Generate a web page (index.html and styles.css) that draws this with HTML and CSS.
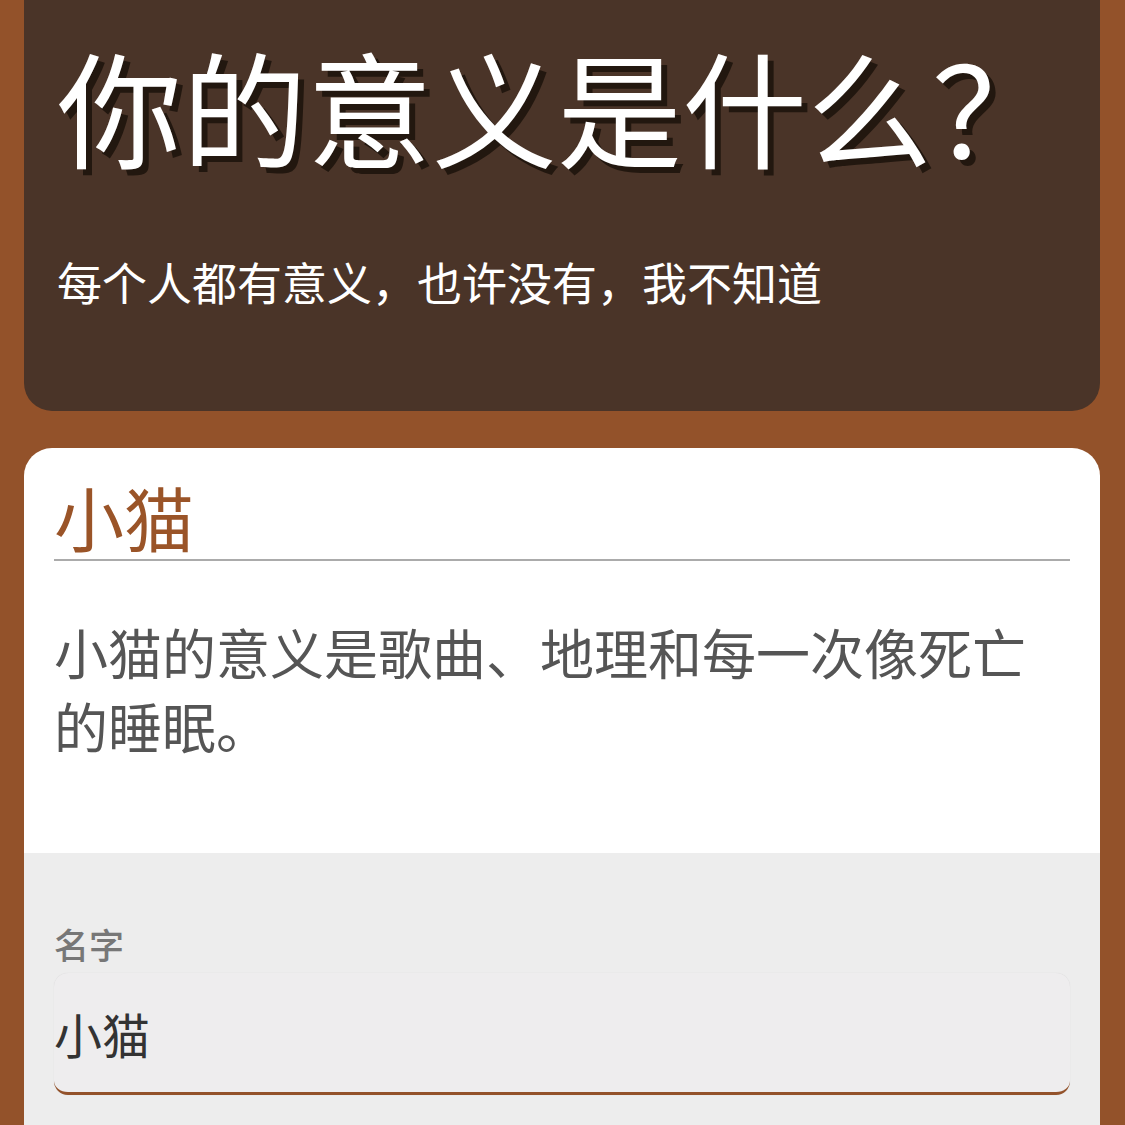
FILE: index.html
```html
<!DOCTYPE html>
<html lang="zh">
<head>
<meta charset="utf-8">
<title>你的意义是什么？</title>
<link rel="stylesheet" href="styles.css">
</head>
<body>
<div class="page">
  <header class="hero">
    <h1 class="hero-title">你的意义是什么？</h1>
    <p class="hero-sub">每个人都有意义，也许没有，我不知道</p>
  </header>
  <section class="card">
    <div class="card-body">
      <h2 class="card-title">小猫</h2>
      <p class="card-text">小猫的意义是歌曲、地理和每一次像死亡的睡眠。</p>
    </div>
    <div class="card-form">
      <label class="field-label" for="name">名字</label>
      <div class="field-input" id="name">小猫</div>
    </div>
  </section>
</div>
</body>
</html>
```

FILE: styles.css
```css
html, body {
  margin: 0;
  padding: 0;
  background: #93522a;
  font-family: "Noto Sans CJK SC", "Noto Sans", sans-serif;
}

.page {
  padding: 0 25px 0 24px;
  display: flex;
  flex-direction: column;
  gap: 37px;
}

.hero {
  background: #4a3428;
  border-radius: 0 0 28px 28px;
  padding: 31px 30px 98px 33px;
}

.hero-title {
  margin: 0;
  font-size: 125px;
  font-weight: 400;
  line-height: 148px;
  color: #ffffff;
  text-shadow: 6px 6px 0 #22170f;
  white-space: nowrap;
}

.hero-sub {
  margin: 71px 0 0 0;
  font-size: 45px;
  line-height: 63px;
  color: #ffffff;
  white-space: nowrap;
}

.card {
  background: #ffffff;
  border-radius: 28px 28px 0 0;
  overflow: hidden;
  height: 720px;
  display: flex;
  flex-direction: column;
}

.card-body {
  padding: 27px 30px 0 30px;
  height: 405px;
  box-sizing: border-box;
  flex: none;
}

.card-title {
  margin: 0;
  font-size: 70px;
  font-weight: 400;
  line-height: 84px;
  color: #9a5428;
  border-bottom: 2px solid #ababab;
}

.card-text {
  margin: 54px 0 0 0;
  font-size: 54px;
  line-height: 74px;
  color: #555555;
}

.card-form {
  flex: 1;
  background: #ededed;
  padding: 71px 30px 0 30px;
  display: flex;
  flex-direction: column;
}

.field-label {
  font-size: 35px;
  line-height: 40px;
  font-weight: 500;
  color: #777777;
  margin-bottom: 9px;
}

.field-input {
  height: 119px;
  flex: none;
  border-radius: 14px;
  border-bottom: 3px solid #93522a;
  background: #eeedee;
  font-size: 48px;
  color: #333333;
  display: flex;
  align-items: center;
  box-shadow: 0 0 1px rgba(0, 0, 0, 0.12);
}
```
